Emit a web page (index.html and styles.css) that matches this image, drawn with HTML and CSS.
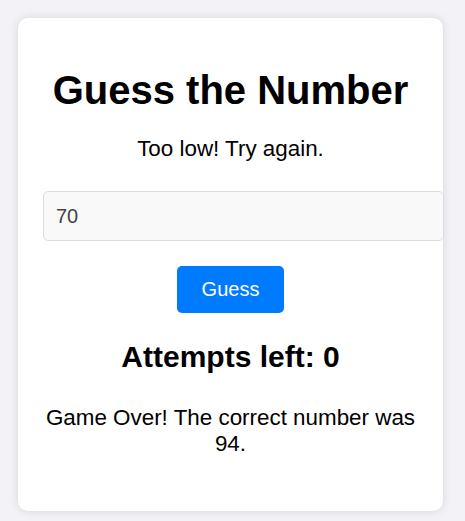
FILE: index.html
```html
<!DOCTYPE html>
<html lang="en">
<head>
<meta charset="utf-8">
<title>Guess the Number</title>
<link rel="stylesheet" href="styles.css">
</head>
<body>
<div class="card">
  <h1 class="title">Guess the Number</h1>
  <p class="message">Too low! Try again.</p>
  <input class="guess-input" type="number" value="70">
  <div class="actions"><button class="guess-btn">Guess</button></div>
  <h2 class="attempts">Attempts left: 0</h2>
  <p class="result">Game Over! The correct number was 94.</p>
</div>
</body>
</html>
```
FILE: styles.css
```css
html, body {
  margin: 0;
  padding: 0;
}
body {
  background: #f3f3f7;
  font-family: "Liberation Sans", Arial, sans-serif;
  color: #000;
  padding: 18px;
}
.card {
  width: 425px;
  box-sizing: border-box;
  background: #fff;
  border-radius: 10px;
  box-shadow: 0 0 10px rgba(0, 0, 0, 0.12);
  padding: 25px;
  text-align: center;
  display: flow-root;
}
.title {
  font-size: 40px;
  font-weight: bold;
  margin: 25px 0 0;
}
.message {
  font-size: 22.4px;
  margin: 23px 0 0;
}
.guess-input {
  display: block;
  width: 100%;
  margin: 29px 0 0;
  padding: 12px;
  font-family: inherit;
  font-size: 20px;
  line-height: 24px;
  color: #444;
  background: #f9f9f9;
  border: 1px solid #ddd;
  border-radius: 5px;
  text-align: left;
  -moz-appearance: textfield;
  appearance: textfield;
}
.guess-input::-webkit-outer-spin-button,
.guess-input::-webkit-inner-spin-button {
  -webkit-appearance: none;
  margin: 0;
}
.actions {
  margin-top: 25px;
  line-height: 0;
}
.guess-btn {
  font-family: inherit;
  font-size: 20px;
  line-height: 23px;
  padding: 12px 25px;
  color: #fff;
  background: #007bff;
  border: none;
  border-radius: 5px;
  cursor: pointer;
}
.attempts {
  font-size: 30px;
  font-weight: bold;
  margin: 27px 0 0;
}
.result {
  font-size: 22.4px;
  margin: 31px 0 29px;
}
```
